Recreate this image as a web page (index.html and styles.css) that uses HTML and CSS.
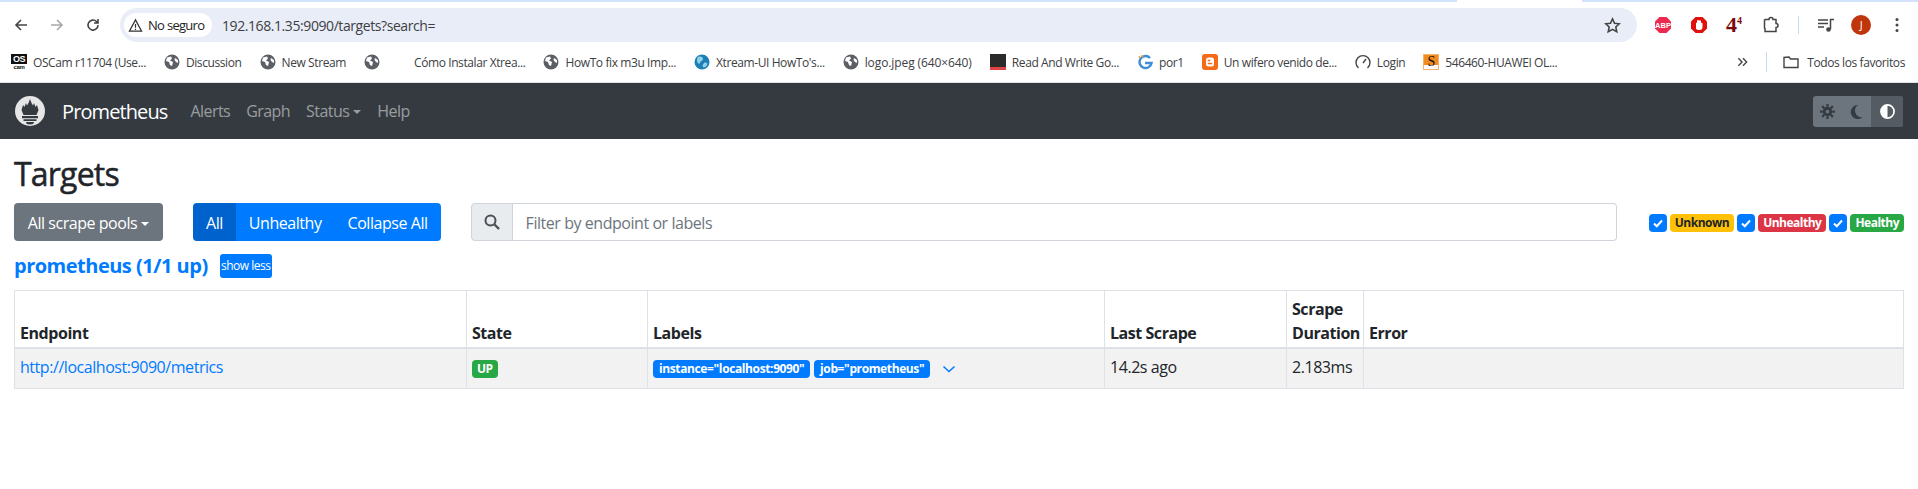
FILE: index.html
```html
<!DOCTYPE html>
<html>
<head>
  <meta name="viewport" content="width=device-width, initial-scale=1">
  <title>Targets</title>
  <link rel="stylesheet" href="styles.css">
</head>
<body>
  <div class="tabstrip"><span class="strip-a"></span><span class="strip-gap"></span><span class="strip-b"></span></div>

  <div class="toolbar">
    <div class="nav-btns">
      <svg class="tb-icon" viewBox="0 0 16 16"><path d="M14 8H3M8 3L3 8l5 5" fill="none" stroke="#444" stroke-width="1.6"/></svg>
      <svg class="tb-icon" viewBox="0 0 16 16"><path d="M2 8h11M8 3l5 5-5 5" fill="none" stroke="#a8a8a8" stroke-width="1.6"/></svg>
      <svg class="tb-icon" viewBox="0 0 16 16"><path d="M13 8a5 5 0 1 1-1.5-3.500L13 6M13 2v4H9" fill="none" stroke="#444" stroke-width="1.6"/></svg>
    </div>
    <div class="omnibox">
      <div class="chip">
        <svg class="warn" viewBox="0 0 16 16"><path d="M8 2L1.500 14h13zM8 6.500v4M8 11.500v1.300" fill="none" stroke="#333" stroke-width="1.300"/></svg>
        <span>No seguro</span>
      </div>
      <span class="url">192.168.1.35:9090/targets?search=</span>
      <svg class="star" viewBox="0 0 16 16"><path d="M8 1.800l1.900 4.100 4.500.5-3.300 3 .9 4.400L8 11.600l-4 2.200.9-4.400-3.300-3 4.500-.5z" fill="none" stroke="#444" stroke-width="1.500"/></svg>
    </div>
    <div class="extensions">
      <svg class="ext" viewBox="0 0 18 18"><path d="M5.500 1h7L17 5.500v7L12.500 17h-7L1 12.500v-7z" fill="#ec2a50"/><text x="9" y="12" class="abp">ABP</text></svg>
      <svg class="ext" viewBox="0 0 18 18"><path d="M5.500 1h7L17 5.500v7L12.500 17h-7L1 12.500v-7z" fill="#e0100f"/><path d="M6 13V7.500a1 1 0 0 1 1-1V5a1 1 0 0 1 2 0 1 1 0 0 1 2 .5V7a1 1 0 0 1 1.500.5V11c0 2-1 3-3 3H8z" fill="#fff"/></svg>
      <span class="four">4<sup>4</sup></span>
      <svg class="ext" viewBox="0 0 18 18"><path d="M2.500 3.500H7a2 2 0 0 1 4 0h3v4a2 2 0 0 1 0 4v4H3v-3.500M2.500 3.500v9" fill="none" stroke="#444" stroke-width="1.500"/></svg>
      <span class="tb-sep"></span>
      <svg class="ext" viewBox="0 0 18 18"><path d="M1 4h10M1 7.500h10M1 11h6" stroke="#444" stroke-width="1.500"/><path d="M13.500 13V3.500H17" fill="none" stroke="#444" stroke-width="1.500"/><circle cx="11.500" cy="13.500" r="2.300" fill="#444"/></svg>
      <span class="avatar">J</span>
      <svg class="dots" viewBox="0 0 4 16"><circle cx="2" cy="2.500" r="1.500"/><circle cx="2" cy="8" r="1.500"/><circle cx="2" cy="13.500" r="1.500"/></svg>
    </div>
  </div>

  <div class="bookmarks">
    <div class="bm"><span class="fav oscam"><b>OS</b><i>cam</i></span><span>OSCam r11704 (Use...</span></div>
    <div class="bm"><svg class="fav" viewBox="0 0 16 16"><use href="#globe"/></svg><span>Discussion</span></div>
    <div class="bm"><svg class="fav" viewBox="0 0 16 16"><use href="#globe"/></svg><span>New Stream</span></div>
    <div class="bm"><svg class="fav" viewBox="0 0 16 16"><use href="#globe"/></svg><span class="blank"></span></div>
    <div class="bm"><span>Cómo Instalar Xtrea...</span></div>
    <div class="bm"><svg class="fav" viewBox="0 0 16 16"><use href="#globe"/></svg><span>HowTo fix m3u Imp...</span></div>
    <div class="bm"><svg class="fav" viewBox="0 0 16 16"><circle cx="8" cy="8" r="7.500" fill="#1d7fb5"/><path d="M4 3c3-1 5 0 5 2s-3 2-3 4-3 0-3-2 0-3 1-4zM10 9c2-1 4 0 3 2s-3 3-4 2 0-3 1-4z" fill="#8fd0ea"/></svg><span>Xtream-UI HowTo's...</span></div>
    <div class="bm"><svg class="fav" viewBox="0 0 16 16"><use href="#globe"/></svg><span class="wide">logo.jpeg (640×640)</span></div>
    <div class="bm"><span class="fav rw"></span><span>Read And Write Go...</span></div>
    <div class="bm"><svg class="fav" viewBox="0 0 16 16"><path d="M13 4a6 6 0 1 0 1.500 5H8" fill="none" stroke="#3f8fd8" stroke-width="2.500"/><path d="M2 2l1 2M5 1l.5 2" stroke="#f2a33a" stroke-width="1.500"/></svg><span>por1</span></div>
    <div class="bm"><svg class="fav" viewBox="0 0 16 16"><rect width="16" height="16" rx="3" fill="#f56a14"/><rect x="4" y="3.500" width="8" height="9" rx="2.500" fill="#fff"/><path d="M5.800 6.500h2.500M5.800 9.500h4.400" stroke="#f56a14" stroke-width="1.300"/></svg><span>Un wifero venido de...</span></div>
    <div class="bm"><svg class="fav" viewBox="0 0 16 16"><path d="M3.500 14a7 7 0 1 1 9 0M8 9l3-4" fill="none" stroke="#444" stroke-width="1.400"/></svg><span>Login</span></div>
    <div class="bm"><span class="fav sfav">S</span><span>546460-HUAWEI OL...</span></div>
    <div class="bm-end">
      <svg class="chev-more" viewBox="0 0 12 10"><path d="M1.500 1l4 4-4 4M6.500 1l4 4-4 4" fill="none" stroke="#444" stroke-width="1.500"/></svg>
      <span class="tb-sep"></span>
      <svg class="fav" viewBox="0 0 16 16"><path d="M1 3.500V13.500h14V5H7.500L6 3z" fill="none" stroke="#444" stroke-width="1.400"/></svg>
      <span class="all-bm">Todos los favoritos</span>
    </div>
  </div>

  <svg class="defs" width="0" height="0"><defs><g id="globe"><circle cx="8" cy="8" r="7.500" fill="#5c6066"/><path d="M3 3.500l4-1 1 2-2 2 3 1.500-1 4-2-1-1-3-3-1zM11 4l3 2v3l-2-1-1.500-2z" fill="#fff"/></g></defs></svg>

  <nav class="navbar">
    <svg class="logo" viewBox="0 0 30 30"><circle cx="15" cy="15" r="15" fill="#e6e6e6"/><path d="M15 3l1.500 4 1.500 2.500L19 7l1.500 4L22 9l1.500 5-2 5h-13l-2-5L8 9l1.500 2L11 7l1 2.500L13.500 7z" fill="#343a40"/><path d="M7 20h16v2.200H7zM8.500 23.200h13V25h-13z" fill="#343a40"/><path d="M11 26h8a4 2.500 0 0 1-8 0z" fill="#343a40"/></svg>
    <span class="brand">Prometheus</span>
    <a class="nav-link">Alerts</a>
    <a class="nav-link">Graph</a>
    <a class="nav-link">Status<span class="caret"></span></a>
    <a class="nav-link">Help</a>
    <div class="theme-toggle">
      <span class="theme-btn">
        <svg viewBox="0 0 16 16"><circle cx="8" cy="8" r="3.500" fill="none" stroke="#343a40" stroke-width="3"/><path d="M8 0v3M8 13v3M0 8h3M13 8h3M2.300 2.300l2.200 2.200M11.500 11.500l2.200 2.200M2.300 13.700l2.200-2.200M11.500 4.500l2.200-2.200" stroke="#343a40" stroke-width="2.400"/></svg>
      </span>
      <span class="theme-btn">
        <svg viewBox="0 0 16 16"><path d="M10 1a7.500 7.500 0 1 0 4.500 13A7 7 0 0 1 10 1z" fill="#343a40"/></svg>
      </span>
      <span class="theme-btn on">
        <svg viewBox="0 0 16 16"><circle cx="8" cy="8" r="7" fill="none" stroke="#fff" stroke-width="1.800"/><path d="M8 1a7 7 0 0 0 0 14z" fill="#fff"/></svg>
      </span>
    </div>
  </nav>

  <main class="container">
    <h1>Targets</h1>
    <div class="controls">
      <button class="btn btn-grey">All scrape pools<span class="caret"></span></button>
      <div class="btn-group">
        <button class="btn btn-blue active">All</button>
        <button class="btn btn-blue">Unhealthy</button>
        <button class="btn btn-blue">Collapse All</button>
      </div>
      <div class="search">
        <span class="search-addon"><svg viewBox="0 0 16 16"><circle cx="6.500" cy="6.500" r="5" fill="none" stroke="#495057" stroke-width="2"/><path d="M10.500 10.500L15 15" stroke="#495057" stroke-width="2.400"/></svg></span>
        <input class="search-input" placeholder="Filter by endpoint or labels">
      </div>
      <div class="filters">
        <span class="check"><svg viewBox="0 0 12 12"><path d="M2 6.500l2.800 2.700L10 3.500" fill="none" stroke="#fff" stroke-width="2"/></svg></span><span class="badge badge-yellow">Unknown</span>
        <span class="check"><svg viewBox="0 0 12 12"><path d="M2 6.500l2.800 2.700L10 3.500" fill="none" stroke="#fff" stroke-width="2"/></svg></span><span class="badge badge-red">Unhealthy</span>
        <span class="check"><svg viewBox="0 0 12 12"><path d="M2 6.500l2.800 2.700L10 3.500" fill="none" stroke="#fff" stroke-width="2"/></svg></span><span class="badge badge-green">Healthy</span>
      </div>
    </div>

    <div class="pool-head">
      <a class="pool-title">prometheus (1/1 up)</a>
      <button class="show-less">show less</button>
    </div>

    <table class="targets">
      <thead>
        <tr>
          <th class="col-endpoint">Endpoint</th>
          <th class="col-state">State</th>
          <th class="col-labels">Labels</th>
          <th class="col-last">Last Scrape</th>
          <th class="col-dur">Scrape Duration</th>
          <th>Error</th>
        </tr>
      </thead>
      <tbody>
        <tr>
          <td><a class="endpoint">http://localhost:9090/metrics</a></td>
          <td><span class="badge badge-green">UP</span></td>
          <td class="labels">
            <span class="badge badge-blue">instance="localhost:9090"</span>
            <span class="badge badge-blue">job="prometheus"</span>
            <svg class="expand" viewBox="0 0 14 8"><path d="M1.500 1.500L7 6.500l5.500-5" fill="none" stroke="#007bff" stroke-width="1.500"/></svg>
          </td>
          <td>14.2s ago</td>
          <td>2.183ms</td>
          <td></td>
        </tr>
      </tbody>
    </table>
  </main>
</body>
</html>
```

FILE: styles.css
```css
body {
  margin: 0;
  background: #fff;
  color: #212529;
  font-family: "Open Sans", "Noto Sans", sans-serif;
  font-size: 16px;
  letter-spacing: -0.45px;
  height: 489px;
  overflow: hidden;
}
.defs {
  display: block;
  height: 0;
}

/* browser chrome */
.tabstrip {
  display: flex;
  height: 2px;
  background: #d3e3fd;
}
.strip-a {
  width: 1457px;
}
.strip-gap {
  width: 125px;
  background: #fff;
}
.toolbar {
  display: flex;
  align-items: center;
  height: 34px;
  margin-top: 6px;
}
.nav-btns {
  display: flex;
  gap: 20px;
  width: 120px;
  padding-left: 13px;
  box-sizing: border-box;
}
.tb-icon {
  width: 16px;
  height: 16px;
}
.omnibox {
  display: flex;
  align-items: center;
  width: 1517px;
  height: 34px;
  background: #e9edf7;
  border-radius: 17px;
  padding: 0 16px 0 4px;
  box-sizing: border-box;
}
.chip {
  display: flex;
  align-items: center;
  gap: 5px;
  width: 88px;
  height: 24px;
  padding-left: 4px;
  box-sizing: border-box;
  background: #fff;
  border-radius: 12px;
  font-size: 13px;
  letter-spacing: -0.7px;
  color: #222;
}
.warn {
  width: 15px;
  height: 15px;
}
.url {
  margin-left: 10px;
  flex: 1;
  font-size: 14px;
  letter-spacing: -0.42px;
  color: #3c4043;
}
.star {
  width: 17px;
  height: 17px;
}
.extensions {
  display: flex;
  align-items: center;
  gap: 18px;
  padding-left: 17px;
}
.ext {
  width: 18px;
  height: 18px;
}
.abp {
  font: bold 7.500px "Liberation Sans", sans-serif;
  letter-spacing: 0;
  fill: #fff;
  text-anchor: middle;
}
.four {
  display: block;
  width: 18px;
  color: #7b0a0a;
  font: bold 22px/20px "Liberation Serif", serif;
  letter-spacing: 0;
}
.four sup {
  font-size: 10px;
  line-height: 0;
  vertical-align: 8px;
}
.tb-sep {
  width: 1px;
  height: 18px;
  background: #c7d8f3;
}
.avatar {
  width: 20px;
  height: 20px;
  margin-left: -2px;
  border-radius: 50%;
  background: #bf360c;
  color: #fff;
  font-size: 11px;
  line-height: 20px;
  text-align: center;
}
.dots {
  width: 4px;
  height: 16px;
  margin-left: 6px;
  fill: #444;
}
.bookmarks {
  display: flex;
  align-items: center;
  gap: 18px;
  height: 40px;
  padding-left: 11px;
  border-bottom: 1px solid #e0e0e0;
  font-size: 12px;
  letter-spacing: -0.4px;
  color: #3c4043;
}
.bm {
  display: flex;
  align-items: center;
  gap: 6px;
  white-space: nowrap;
}
.wide {
  letter-spacing: -0.1px;
}
.fav {
  display: block;
  width: 16px;
  height: 16px;
  flex: none;
}
.blank {
  width: 10px;
}
.oscam {
  background: #fff;
  color: #111;
  font-style: normal;
  text-align: center;
  line-height: 1;
}
.oscam b {
  display: block;
  background: #111;
  color: #fff;
  font: bold 9px/10px "Liberation Sans", sans-serif;
}
.oscam i {
  display: block;
  font: bold 6px/6px "Liberation Sans", sans-serif;
}
.rw {
  background: #2b2b2b;
  border-bottom: 3px solid #e04343;
  box-sizing: border-box;
}
.sfav {
  background: linear-gradient(#f28c1e 70%, #fff 70%);
  border: 1px solid #f5b26b;
  box-sizing: border-box;
  color: #111;
  font: 14px/14px "Liberation Serif", serif;
  text-align: center;
}
.bm-end {
  display: flex;
  align-items: center;
  margin-left: auto;
  padding-right: 13px;
  white-space: nowrap;
}
.chev-more {
  width: 11px;
  height: 10px;
  margin-right: 18px;
}
.bm-end .tb-sep {
  height: 20px;
  margin-right: 16px;
}
.all-bm {
  margin-left: 8px;
}

/* prometheus page */
.navbar {
  display: flex;
  align-items: center;
  height: 56px;
  padding: 0 15px;
  background: #343a40;
}
.logo {
  width: 30px;
  height: 30px;
  margin-right: 17px;
}
.brand {
  margin-right: 15px;
  color: #fff;
  font-size: 20px;
  letter-spacing: -0.9px;
}
.nav-link {
  padding: 0 8px;
  letter-spacing: -0.55px;
  color: rgba(255, 255, 255, 0.5);
}
.caret {
  display: inline-block;
  margin-left: 4px;
  vertical-align: 3px;
  border-top: 4.800px solid;
  border-left: 4.800px solid transparent;
  border-right: 4.800px solid transparent;
}
.theme-toggle {
  display: flex;
  margin-left: auto;
  height: 31px;
  border-radius: 3px;
  overflow: hidden;
  background: #6c757d;
}
.theme-btn {
  display: flex;
  align-items: center;
  justify-content: center;
  width: 29px;
}
.theme-btn svg {
  width: 15px;
  height: 15px;
}
.theme-btn.on {
  width: 32px;
  background: #545b62;
}
.container {
  padding: 0 14px;
}
h1 {
  margin: 0;
  padding-top: 15px;
  height: 49px;
  font-size: 32px;
  font-weight: 500;
  line-height: 40px;
  letter-spacing: -0.8px;
  -webkit-text-stroke: 0.5px #212529;
}
.controls {
  display: flex;
  align-items: center;
  height: 38px;
}
.btn {
  height: 38px;
  padding: 2px 13px 0;
  border: 0;
  border-radius: 4px;
  color: #fff;
  font: inherit;
  letter-spacing: inherit;
  white-space: nowrap;
}
.btn-grey {
  width: 149px;
  background: #6c757d;
}
.btn-group {
  display: flex;
  margin-left: 30px;
}
.btn-blue {
  background: #007bff;
  border-radius: 0;
}
.btn-blue:first-child {
  border-radius: 4px 0 0 4px;
}
.btn-blue:last-child {
  border-radius: 0 4px 4px 0;
}
.btn-blue.active {
  background: #0062cc;
}
.search {
  display: flex;
  width: 1146px;
  height: 38px;
  margin-left: 30px;
}
.search-addon {
  display: flex;
  align-items: center;
  justify-content: center;
  width: 42px;
  background: #e9ecef;
  border: 1px solid #ced4da;
  border-radius: 4px 0 0 4px;
  box-sizing: border-box;
}
.search-addon svg {
  width: 16px;
  height: 16px;
}
.search-input {
  flex: 1;
  min-width: 0;
  padding: 2px 13px 0;
  border: 1px solid #ced4da;
  border-left: 0;
  border-radius: 0 4px 4px 0;
  font: inherit;
  letter-spacing: inherit;
}
.search-input::placeholder {
  color: #6c757d;
  opacity: 1;
}
.filters {
  display: flex;
  align-items: center;
  gap: 3px;
  margin-left: auto;
  margin-top: 2px;
}
.check {
  display: flex;
  align-items: center;
  justify-content: center;
  width: 18px;
  height: 18px;
  background: #007bff;
  border-radius: 4px;
}
.check svg {
  width: 12px;
  height: 12px;
}
.badge {
  display: inline-block;
  padding: 0 5px;
  height: 18px;
  border-radius: 4px;
  font-size: 12px;
  font-weight: 700;
  line-height: 18px;
  letter-spacing: -0.5px;
  white-space: nowrap;
}
.badge-yellow {
  background: #ffc107;
  color: #212529;
}
.badge-red {
  background: #dc3545;
  color: #fff;
}
.badge-green {
  background: #28a745;
  color: #fff;
}
.badge-blue {
  background: #007bff;
  color: #fff;
  letter-spacing: -0.38px;
  padding: 0 6px;
}
.pool-head {
  display: flex;
  align-items: center;
  gap: 12px;
  height: 49px;
}
.pool-title {
  color: #007bff;
  font-size: 20px;
  font-weight: 700;
  letter-spacing: -0.5px;
}
.show-less {
  width: 52px;
  height: 24px;
  padding: 0;
  background: #007bff;
  color: #fff;
  border: 0;
  border-radius: 3px;
  font: inherit;
  font-size: 12px;
  letter-spacing: -0.5px;
}
.targets {
  width: 1890px;
  border-collapse: collapse;
  table-layout: fixed;
}
.targets th,
.targets td {
  padding: 5px;
  box-sizing: border-box;
  border: 1px solid #dee2e6;
  text-align: left;
}
.targets th {
  vertical-align: bottom;
  border-bottom-width: 2px;
  line-height: 24px;
  padding-top: 6px;
  padding-bottom: 2px;
  font-weight: 700;
}
.targets td {
  height: 40px;
  padding-top: 0;
  padding-bottom: 2px;
  background: #f2f2f2;
}
.col-endpoint {
  width: 452px;
}
.col-state {
  width: 181px;
}
.col-labels {
  width: 457px;
}
.col-last {
  width: 182px;
}
.col-dur {
  width: 77px;
}
.endpoint {
  color: #007bff;
}
.expand {
  width: 14px;
  height: 8px;
  margin-left: 8px;
}
```
